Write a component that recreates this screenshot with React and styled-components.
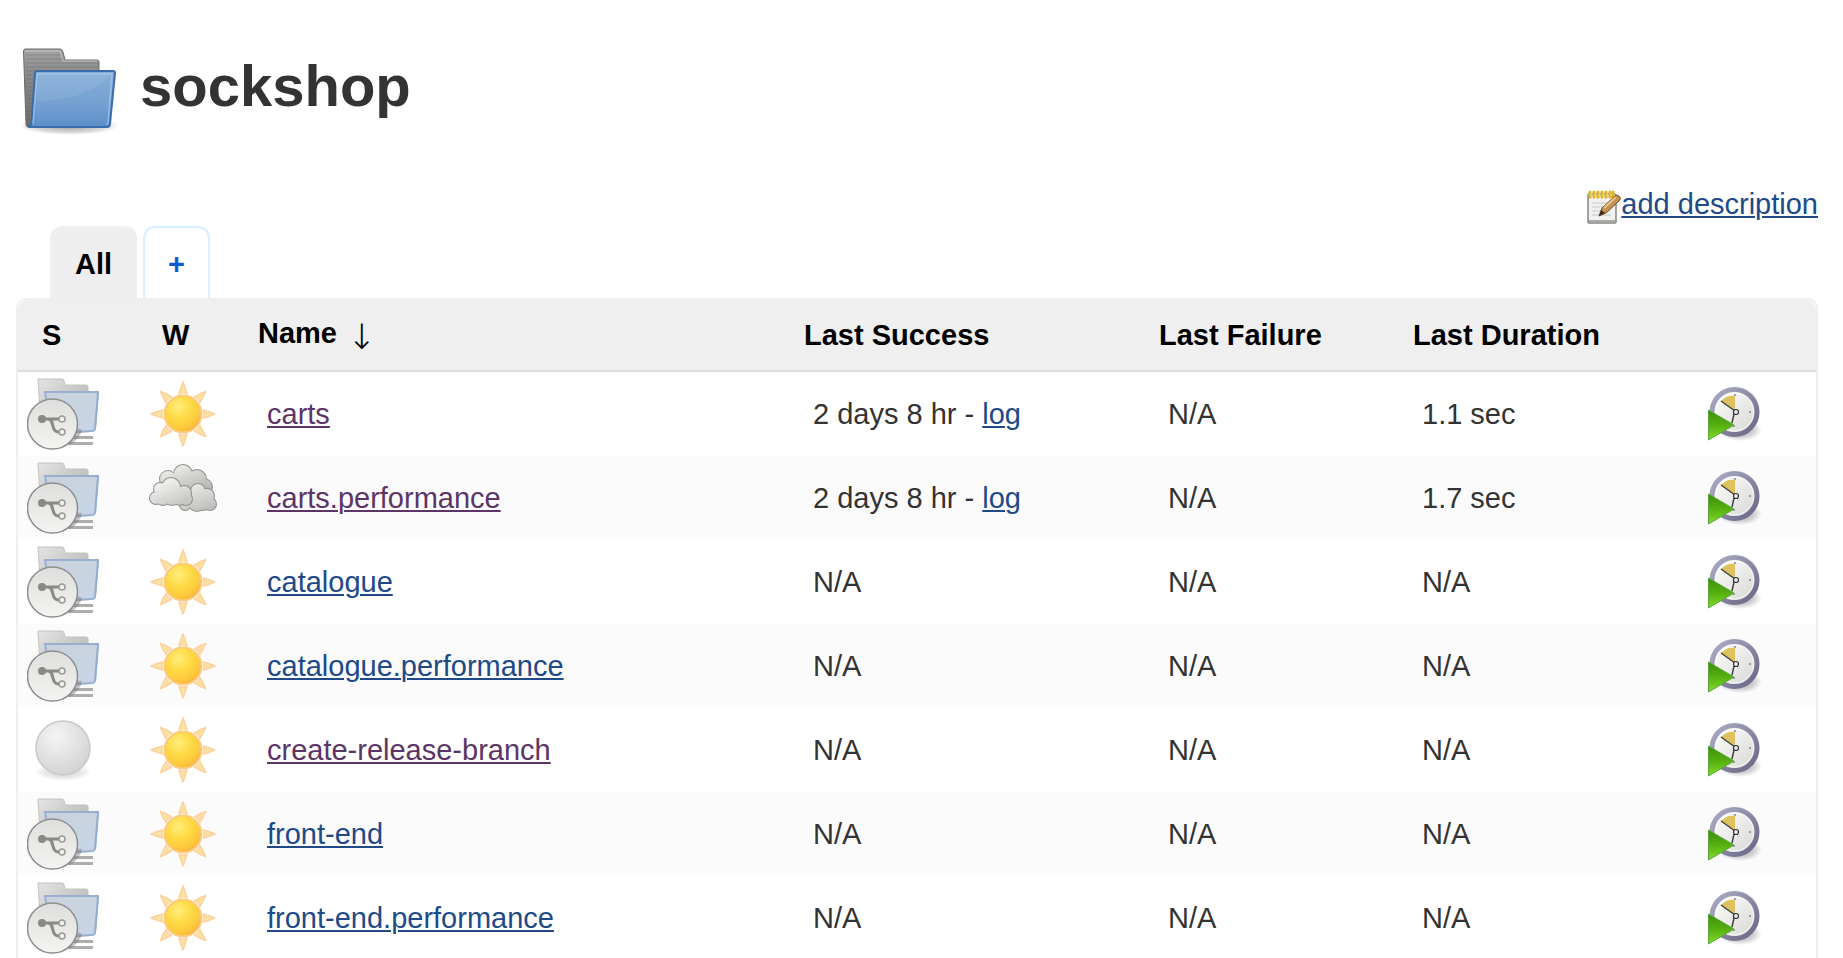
import React from 'react';
import styled, { createGlobalStyle } from 'styled-components';

const GlobalStyle = createGlobalStyle`
  *, *::before, *::after { box-sizing: border-box; }
  body {
    margin: 0;
    background: #fff;
    color: #333;
    font: 29px/34px "Liberation Sans", Arial, Helvetica, sans-serif;
  }
`;

const Page = styled.main`
  height: 100vh;
  overflow: hidden;
  padding: 44px 25px 0 16px;
`;

const TitleBar = styled.header`
  display: flex;
  align-items: center;
  gap: 20px;
  padding-left: 4px;
`;

const Title = styled.h1`
  margin: 0;
  font-size: 58px;
  line-height: 66px;
  padding-bottom: 12px;
`;

const DescriptionBar = styled.div`
  display: flex;
  justify-content: flex-end;
  align-items: flex-end;
  height: 38px;
  margin-top: 46px;
`;

const Link = styled.a`
  color: ${(p) => (p.$visited ? '#5c3566' : '#204a87')};
  text-decoration: underline;
  text-decoration-thickness: 2px;
  text-underline-offset: 2px;
`;

const DescriptionLink = styled(Link)`
  padding-bottom: 3px;
`;

const Tabs = styled.nav`
  display: flex;
  gap: 6px;
  padding-left: 34px;
  margin-top: 2px;
  margin-bottom: -2px;
`;

const Tab = styled.a`
  height: 74px;
  padding: 19px 23px;
  border: 2px solid ${(p) => (p.$active ? '#efefef' : '#d9efff')};
  border-bottom: 0;
  border-radius: 12px 12px 0 0;
  background: ${(p) => (p.$active ? '#eee' : '#fff')};
  color: ${(p) => (p.$active ? '#000' : '#0b5cd2')};
  font-weight: bold;
  text-decoration: none;
`;

const TableFrame = styled.section`
  position: relative;
  border: 2px solid #efefef;
  border-radius: 10px 10px 0 0;
  background: #fff;
`;

const JobTable = styled.table`
  width: 100%;
  table-layout: fixed;
  border-collapse: separate;
  border-spacing: 0;
`;

const Col = styled.col`
  width: ${(p) => p.$width};
`;

const HeadCell = styled.th`
  height: 72px;
  padding: 0 0 0 24px;
  border-bottom: 2px solid #ddd;
  background: #efefef;
  color: #000;
  text-align: left;
  white-space: nowrap;
  &:first-child { border-top-left-radius: 10px; }
  &:last-child { border-top-right-radius: 10px; }
`;

const SortArrow = styled.span`
  display: inline-block;
  margin-left: 2px;
  font: 200 35px/34px "DejaVu Sans", sans-serif;
  vertical-align: -6px;
`;

const Row = styled.tr`
  background: #fff;
  &:nth-child(even) { background: #fbfbfb; }
`;

const Cell = styled.td`
  height: 84px;
  padding: 0 0 0 33px;
  white-space: nowrap;
`;

const IconCell = styled.td`
  height: 84px;
  padding: 0 0 0 9px;
`;

const ActionCell = styled(IconCell)`
  padding-left: 24px;
`;

const Icon = styled.svg`
  display: block;
  flex: none;
  width: ${(p) => p.$w}px;
  height: ${(p) => p.$h || p.$w}px;
`;

const RunButton = styled.button`
  display: block;
  padding: 0;
  border: 0;
  background: none;
  cursor: pointer;
`;

function Gradients() {
  return (
    <Icon $w={0} aria-hidden="true">
      <defs>
        <linearGradient id="folderFront" x1="0" y1="0" x2="0" y2="1">
          <stop offset="0" stopColor="#86afd9" /><stop offset=".55" stopColor="#76a2d2" /><stop offset="1" stopColor="#5c8fc9" />
        </linearGradient>
        <linearGradient id="folderBack" x1="0" y1="0" x2="0" y2="1">
          <stop offset="0" stopColor="#a4a4a4" /><stop offset=".3" stopColor="#8b8b8b" /><stop offset="1" stopColor="#6c6c6c" />
        </linearGradient>
        <linearGradient id="paleBack" x1="0" y1="0" x2="1" y2="1">
          <stop offset="0" stopColor="#e4e4e4" /><stop offset="1" stopColor="#aaa" />
        </linearGradient>
        <linearGradient id="paleFront" x1="0" y1="0" x2="0" y2="1">
          <stop offset="0" stopColor="#c9d3de" /><stop offset="1" stopColor="#c7d5e6" />
        </linearGradient>
        <linearGradient id="disc" x1="0" y1="0" x2="0" y2="1">
          <stop offset="0" stopColor="#dededc" /><stop offset="1" stopColor="#f4f4f3" />
        </linearGradient>
        <radialGradient id="sunFill" cx=".38" cy=".3" r=".75">
          <stop offset="0" stopColor="#ffed7c" /><stop offset=".45" stopColor="#fed943" /><stop offset=".8" stopColor="#fdc83c" /><stop offset="1" stopColor="#f7a83a" />
        </radialGradient>
        <radialGradient id="ballFill" cx=".38" cy=".3" r=".75">
          <stop offset="0" stopColor="#f5f5f5" /><stop offset=".5" stopColor="#e3e3e3" /><stop offset="1" stopColor="#d2d2d2" />
        </radialGradient>
        <radialGradient id="shadow">
          <stop offset="0" stopColor="#000" stopOpacity=".38" /><stop offset=".7" stopColor="#000" stopOpacity=".15" /><stop offset="1" stopColor="#000" stopOpacity="0" />
        </radialGradient>
        <linearGradient id="cloud0" gradientUnits="userSpaceOnUse" x1="30" y1="2" x2="42" y2="34">
          <stop offset="0" stopColor="#ededec" /><stop offset="1" stopColor="#b5b5b2" />
        </linearGradient>
        <linearGradient id="cloud1" gradientUnits="userSpaceOnUse" x1="48" y1="22" x2="58" y2="50">
          <stop offset="0" stopColor="#e9e9e8" /><stop offset="1" stopColor="#bcbcb9" />
        </linearGradient>
        <linearGradient id="cloud2" gradientUnits="userSpaceOnUse" x1="18" y1="16" x2="30" y2="44">
          <stop offset="0" stopColor="#f4f4f3" /><stop offset="1" stopColor="#c6c6c3" />
        </linearGradient>
        <linearGradient id="ring" x1="0" y1="0" x2="1" y2="1">
          <stop offset="0" stopColor="#adadc6" /><stop offset="1" stopColor="#696585" />
        </linearGradient>
        <linearGradient id="face" x1="0" y1="0" x2="1" y2="1">
          <stop offset="0" stopColor="#fff" /><stop offset="1" stopColor="#d6d7d3" />
        </linearGradient>
        <linearGradient id="play" x1="0" y1="0" x2="0" y2="1">
          <stop offset="0" stopColor="#3c8c0e" /><stop offset=".5" stopColor="#55b00f" /><stop offset="1" stopColor="#86dc2c" />
        </linearGradient>
      </defs>
    </Icon>
  );
}

function FolderIcon() {
  return (
    <Icon $w={100} $h={96} viewBox="0 0 100 96" aria-hidden="true">
      <ellipse cx="49" cy="82" rx="50" ry="9" fill="url(#shadow)" />
      <path d="M3.500 7Q3.500 5 5.500 5H40Q42 5 43 8L45 16H77Q79 16 79 18V83H8Q6 83 6 80Z" fill="url(#folderBack)" stroke="#696969" />
      <path d="M5 7H40L43 17H77" fill="none" stroke="#c4c4c4" />
      <path d="M6 11H41M6 15H43M6 19H78M6 23H78M6 27H16M6 31H15M6 35H15M6 39H14M6 43H14M7 47H14M7 51H13M7 55H13M7 59H13M7 63H12M7 67H12M7 71H12M7 75H11" stroke="#555" strokeOpacity=".3" />
      <path d="M17 27H93Q95 27 95 29L90 80Q89.500 83 87 83H9Q11 82 11.500 79L15 29Q15 27 17 27Z" fill="url(#folderFront)" stroke="#3b6cab" strokeWidth="2" strokeLinejoin="round" />
      <path d="M17 57C48 57 73 48 91 31L92 30H17Z" fill="#fff" opacity=".07" />
      <path d="M13 80L17 30H92L88 79Q88 80 86 80" fill="none" stroke="#b2cfee" strokeOpacity=".6" strokeWidth="1.500" />
    </Icon>
  );
}

function BranchFolderIcon() {
  return (
    <Icon $w={72} viewBox="0 0 72 72" role="img" aria-label="Multibranch pipeline">
      <path d="M11 1H35Q37 1 37 3L38 7H59Q61 7 61 9V50H14Z" fill="url(#paleBack)" stroke="#c2c2c2" />
      <path d="M44 58H66V61H44ZM40 64H66V67H40Z" fill="#adadad" />
      <path d="M18 14H71L68 51Q67 53 65 53L25 56Z" fill="url(#paleFront)" stroke="#98b0d0" strokeWidth="2" />
      <path d="M71.500 14L68.500 50" stroke="#8dabd6" />
      <path d="M41 65Q50 60 53 51" fill="none" stroke="#777" strokeOpacity=".45" strokeWidth="5" />
      <circle cx="25.500" cy="46" r="25" fill="url(#disc)" stroke="#8e8e8e" strokeWidth="1.500" />
      <path d="M15 41H32M21 41C28 41 23 54 32 54" fill="none" stroke="#888a84" strokeWidth="3" />
      <circle cx="15" cy="41" r="4" fill="#888a84" />
      <circle cx="35" cy="41" r="3" fill="#eee" stroke="#999b95" strokeWidth="1.500" />
      <circle cx="35" cy="54" r="3" fill="#eee" stroke="#999b95" strokeWidth="1.500" />
    </Icon>
  );
}

function BallIcon() {
  return (
    <Icon $w={72} viewBox="0 0 72 72" role="img" aria-label="Not built">
      <ellipse cx="36" cy="58" rx="29" ry="9" fill="url(#shadow)" opacity=".5" />
      <circle cx="36" cy="34" r="27" fill="url(#ballFill)" stroke="#c9c9c9" strokeWidth="1.500" />
    </Icon>
  );
}

function SunIcon() {
  return (
    <Icon $w={72} viewBox="0 0 72 72" role="img" aria-label="Sunny">
      {[0, 45, 90, 135, 180, 225, 270, 315].map((angle) => (
        <path
          key={angle}
          d="M36 4L38 9L40 16Q36 13.500 32 16L34 9Z"
          transform={`rotate(${angle} 36 36)`}
          fill="#fbe2a0"
          stroke="#fcd3a0"
          strokeWidth="1.500"
          strokeLinejoin="round"
        />
      ))}
      <circle cx="36" cy="36" r="18.500" fill="url(#sunFill)" stroke="#fbcb80" strokeWidth="2" />
    </Icon>
  );
}

const clouds = [
  [[36, 12, 9], [21, 17, 8], [50, 17, 9], [57, 25, 8], [40, 24, 14]],
  [[51, 29, 7], [42, 34, 7], [60, 34, 7], [63, 42, 6], [50, 40, 9], [38, 43, 5], [56, 42, 6]],
  [[24, 25, 9], [13, 27, 6], [9, 36, 6], [37, 31, 7], [39, 37, 6], [25, 34, 9], [16, 37, 6], [33, 38, 5]],
];

function CloudIcon() {
  return (
    <Icon $w={72} viewBox="0 0 72 72" role="img" aria-label="Cloudy">
      {clouds.map((puffs, layer) => (
        <g key={layer}>
          {puffs.map(([x, y, r]) => <circle key={`${x}-${y}`} cx={x} cy={y} r={r} fill="#8f8f8c" stroke="#8f8f8c" strokeWidth="2" />)}
          {puffs.map(([x, y, r]) => <circle key={`${x}+${y}`} cx={x} cy={y} r={r} fill={`url(#cloud${layer})`} />)}
        </g>
      ))}
    </Icon>
  );
}

function ScheduleIcon() {
  return (
    <Icon $w={54} viewBox="0 0 54 54" aria-hidden="true">
      <ellipse cx="32" cy="43" rx="22" ry="11" fill="url(#shadow)" />
      <circle cx="26.500" cy="25" r="22.500" fill="url(#face)" stroke="url(#ring)" strokeWidth="5" />
      <circle cx="26.500" cy="25" r="19" fill="none" stroke="#fff" strokeOpacity=".7" />
      <path d="M13 14Q19 8 27 9V24Z" fill="#dfc25d" />
      <path d="M13 14L27 24M26 27L24 36" stroke="#444" strokeWidth="1.500" fill="none" />
      <circle cx="28" cy="25" r="2.500" fill="#eee" stroke="#333" strokeWidth="1.200" />
      <path d="M27 7V9M42 24V26M26 38V40" stroke="#888" strokeWidth="1.500" />
      <path d="M0.500 23L26 38L0.500 53Z" fill="url(#play)" stroke="#57a63a" />
    </Icon>
  );
}

function NotepadIcon() {
  return (
    <Icon $w={34} viewBox="0 0 34 34" aria-hidden="true">
      <path d="M2 4H27Q29 4 29 6V32Q29 33 28 33H2Q1 33 1 32V5Q1 4 2 4Z" fill="#f1f1f0" stroke="#858783" strokeWidth="1.500" />
      <path d="M5 13H24M5 17H23M5 21H23M5 25H24" stroke="#c8c8c6" />
      <path d="M2 31H28" stroke="#aaaba8" strokeWidth="2" />
      <path d="M3 2V7M7 2V7M11 2V7M15 2V7M19 2V7M23 2V7M26 2V7" stroke="#dcb31c" strokeWidth="3" strokeLinecap="round" />
      <path d="M4 3V6M8 3V6M12 3V6M16 3V6M20 3V6M24 3V6" stroke="#f7e27a" />
      <path d="M12 26L15 18L28 6Q31 4 33 7Q34 9 32 11L19 23Z" fill="#c19252" stroke="#765226" />
      <path d="M17 18L29 7" stroke="#e9c68e" strokeWidth="2" />
      <path d="M12 26L14 20L18 23Z" fill="#3c2a14" />
    </Icon>
  );
}

const jobs = [
  { name: 'carts', visited: true, success: '2 days 8 hr', duration: '1.1 sec' },
  { name: 'carts.performance', visited: true, cloudy: true, success: '2 days 8 hr', duration: '1.7 sec' },
  { name: 'catalogue' },
  { name: 'catalogue.performance' },
  { name: 'create-release-branch', visited: true, plain: true },
  { name: 'front-end' },
  { name: 'front-end.performance' },
];

function JobRow({ job }) {
  return (
    <Row>
      <IconCell>{job.plain ? <BallIcon /> : <BranchFolderIcon />}</IconCell>
      <IconCell>{job.cloudy ? <CloudIcon /> : <SunIcon />}</IconCell>
      <Cell><Link href={`#${job.name}`} $visited={job.visited}>{job.name}</Link></Cell>
      <Cell>
        {job.success ? <>{job.success} - <Link href={`#${job.name}-log`}>log</Link></> : 'N/A'}
      </Cell>
      <Cell>N/A</Cell>
      <Cell>{job.duration || 'N/A'}</Cell>
      <ActionCell>
        <RunButton type="button" aria-label={`Schedule a build for ${job.name}`}><ScheduleIcon /></RunButton>
      </ActionCell>
    </Row>
  );
}

export default function App() {
  return (
    <Page>
      <GlobalStyle />
      <TitleBar>
        <FolderIcon />
        <Title>sockshop</Title>
      </TitleBar>
      <DescriptionBar>
        <NotepadIcon />
        <DescriptionLink href="#description">add description</DescriptionLink>
      </DescriptionBar>
      <Tabs>
        <Tab href="#all" $active>All</Tab>
        <Tab href="#new" aria-label="New view">+</Tab>
      </Tabs>
      <TableFrame>
        <JobTable>
          <colgroup>
            <Col $width="120px" />
            <Col $width="96px" />
            <Col $width="auto" />
            <Col $width="355px" />
            <Col $width="254px" />
            <Col $width="295px" />
            <Col $width="132px" />
          </colgroup>
          <thead>
            <tr>
              <HeadCell>S</HeadCell>
              <HeadCell>W</HeadCell>
              <HeadCell>Name <SortArrow>↓</SortArrow></HeadCell>
              <HeadCell>Last Success</HeadCell>
              <HeadCell>Last Failure</HeadCell>
              <HeadCell>Last Duration</HeadCell>
              <HeadCell aria-label="Actions" />
            </tr>
          </thead>
          <tbody>
            {jobs.map((job) => <JobRow key={job.name} job={job} />)}
          </tbody>
        </JobTable>
      </TableFrame>
      <Gradients />
    </Page>
  );
}
